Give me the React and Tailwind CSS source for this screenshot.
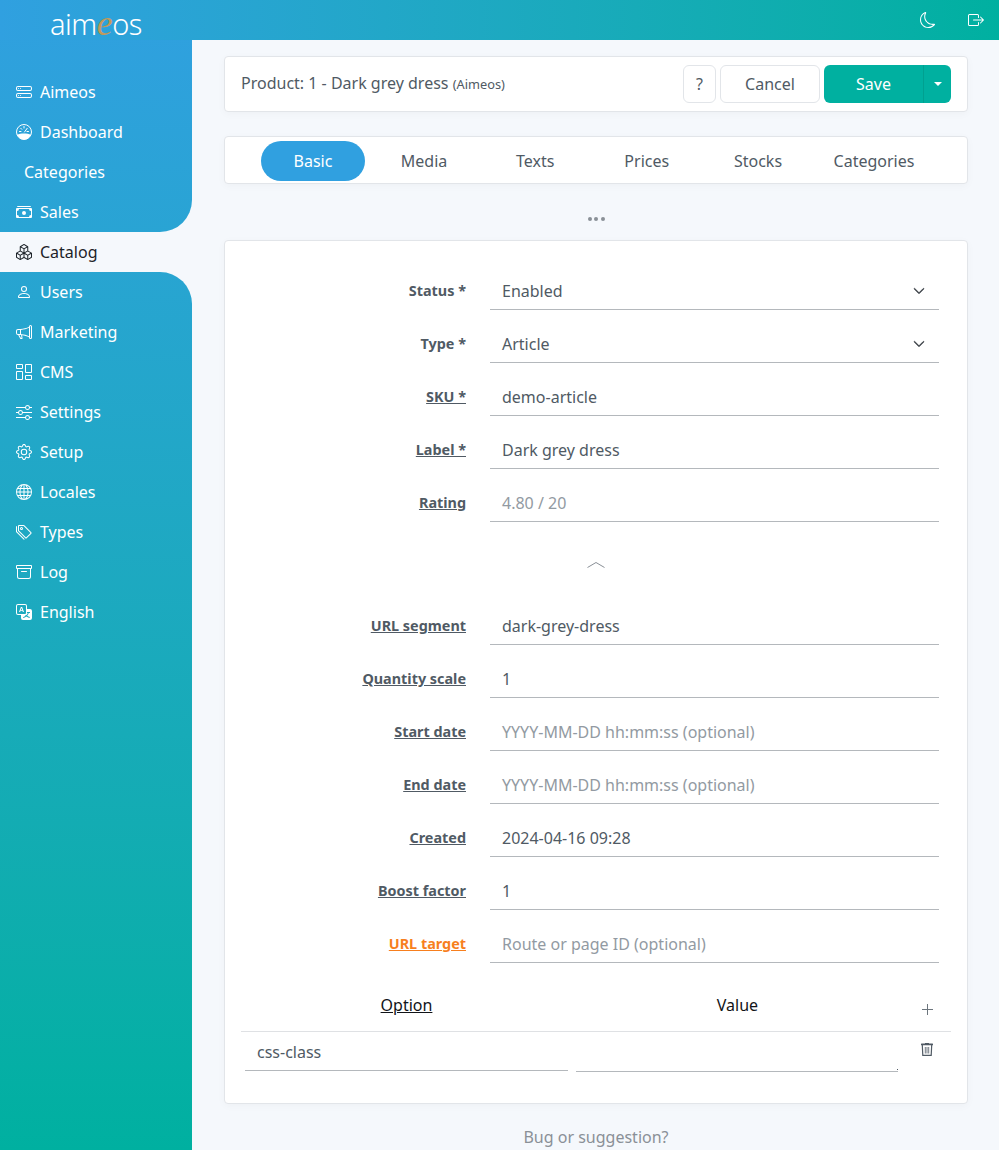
import React from "react";
import {
  BsArchive,
  BsBoxArrowRight,
  BsBoxes,
  BsCashStack,
  BsChevronDown,
  BsColumnsGap,
  BsGear,
  BsGlobe,
  BsHddStack,
  BsMegaphone,
  BsMoon,
  BsPerson,
  BsSliders,
  BsTags,
  BsTranslate,
} from "react-icons/bs";

const GaugeIcon = ({ className }) => (
  <svg className={className} viewBox="0 0 16 16" fill="none" stroke="currentColor">
    <circle cx="8" cy="8" r="7.5" />
    <path d="M1 10.5 C5 9 11 9 15 10.5 C14 13.5 11 15.5 8 15.5 C5 15.5 2 13.5 1 10.5Z" fill="currentColor" stroke="none" />
    <path d="M8 2.5 V4 M3.5 7.5 H5 M11 7.5 H12.5 M4.8 4.3 L5.8 5.3 M11.2 4.3 L8.5 8" strokeLinecap="round" />
  </svg>
);

const PlusIcon = ({ className }) => (
  <svg className={className} viewBox="0 0 11 11" fill="none" stroke="currentColor">
    <path d="M5.5 0 V11 M0 5.5 H11" />
  </svg>
);

const TrashIcon = ({ className }) => (
  <svg className={className} viewBox="0 0 12 14" fill="none" stroke="currentColor" strokeWidth="1.2">
    <path d="M4 1 H8 V2 H4Z" fill="currentColor" stroke="none" />
    <rect x="0" y="1.5" width="12" height="1.8" rx="0.5" fill="currentColor" stroke="none" />
    <path d="M1.3 3 L1.8 13.4 H10.2 L10.7 3" />
    <path d="M4.3 5 V11.5 M6 5 V11.5 M7.7 5 V11.5" strokeWidth="1" strokeOpacity="0.8" />
  </svg>
);

const topItems = [
  { label: "Aimeos", icon: BsHddStack },
  { label: "Dashboard", icon: GaugeIcon },
  { label: "Categories" },
  { label: "Sales", icon: BsCashStack },
];

const bottomItems = [
  { label: "Users", icon: BsPerson },
  { label: "Marketing", icon: BsMegaphone },
  { label: "CMS", icon: BsColumnsGap },
  { label: "Settings", icon: BsSliders },
  { label: "Setup", icon: BsGear },
  { label: "Locales", icon: BsGlobe },
  { label: "Types", icon: BsTags },
  { label: "Log", icon: BsArchive },
  { label: "English", icon: BsTranslate },
];

const tabs = [
  { label: "Basic", className: "w-[104px] bg-[#30a0e0] text-white rounded-[20px]" },
  { label: "Media", className: "w-[104px] ml-[7px]" },
  { label: "Texts", className: "w-[104.5px] ml-[7px]" },
  { label: "Prices", className: "w-[104.5px] ml-[7px]" },
  { label: "Stocks", className: "w-[104px] ml-[7px]" },
  { label: "Categories", className: "w-[114px] ml-[7px]" },
];

const basicFields = [
  { label: "Status *", value: "Enabled", select: true },
  { label: "Type *", value: "Article", select: true },
  { label: "SKU *", value: "demo-article", help: true },
  { label: "Label *", value: "Dark grey dress", help: true },
  { label: "Rating", value: "4.80 / 20", help: true, muted: true },
];

const moreFields = [
  { label: "URL segment", value: "dark-grey-dress", help: true },
  { label: "Quantity scale", value: "1", help: true },
  { label: "Start date", value: "YYYY-MM-DD hh:mm:ss (optional)", help: true, muted: true },
  { label: "End date", value: "YYYY-MM-DD hh:mm:ss (optional)", help: true, muted: true },
  { label: "Created", value: "2024-04-16 09:28", help: true },
  { label: "Boost factor", value: "1", help: true },
  { label: "URL target", value: "Route or page ID (optional)", help: true, muted: true, orange: true },
];

const NavItem = ({ item }) => {
  const Icon = item.icon;
  return (
    <div className="h-10 flex items-center pl-4 text-white text-base">
      {Icon ? (
        <>
          <Icon className="w-4 h-4 mr-2 shrink-0" />
          <span>{item.label}</span>
        </>
      ) : (
        <span className="pl-2">{item.label}</span>
      )}
    </div>
  );
};

const Field = ({ field }) => {
  let labelColor = "text-[#505a64]";
  if (field.orange) labelColor = "text-[#f77f1e]";
  return (
    <div className="h-[53px] flex">
      <div className="w-[225px] h-[38px] flex items-center justify-end">
        <span className={`text-[14.4px] font-bold ${labelColor} ${field.help ? "underline" : ""}`}>
          {field.label}
        </span>
      </div>
      <div className="w-[449px] ml-6 h-[38px] border-b border-[#b4b8bc] flex items-center justify-between pl-3 pr-[14px]">
        <span className={field.muted ? "text-[#929aa2]" : "text-[#505a64]"}>{field.value}</span>
        {field.select && <BsChevronDown className="w-3 h-3 text-[#343a40] stroke-1" />}
      </div>
    </div>
  );
};

export default function App() {
  return (
    <div className="w-[999px] h-[1150px] overflow-hidden bg-[#f5f8fc] font-['Noto_Sans',sans-serif] text-base text-[#505a64] flex flex-col">
      <header className="h-10 shrink-0 bg-gradient-to-r from-[#30a0e0] to-[#00b0a0] flex items-center justify-between">
        <div className="w-[192px] mt-[6px] flex justify-center items-baseline text-white text-[29px] font-light leading-[34px] tracking-[-0.5px]">
          aim<span className="text-[#c2995a] italic font-['Liberation_Serif',serif] text-[36px] leading-none">e</span>os
        </div>
        <div className="flex items-center pr-[15px]">
          <BsMoon className="w-4 h-4 text-white" />
          <BsBoxArrowRight className="w-4 h-4 text-white ml-[32px]" />
        </div>
      </header>

      <div className="flex-1 flex min-h-0">
        <aside className="w-[192px] shrink-0 flex flex-col">
          <nav className="h-[192px] pt-8 rounded-br-[32px] bg-fixed bg-gradient-to-b from-[#30a0e0] to-[#00b0a0]">
            {topItems.map((item) => (
              <NavItem key={item.label} item={item} />
            ))}
          </nav>
          <div className="h-10 flex items-center pl-4 text-[#1d2329]">
            <BsBoxes className="w-4 h-4 mr-2" />
            <span>Catalog</span>
          </div>
          <nav className="flex-1 rounded-tr-[32px] bg-fixed bg-gradient-to-b from-[#30a0e0] to-[#00b0a0]">
            {bottomItems.map((item) => (
              <NavItem key={item.label} item={item} />
            ))}
          </nav>
        </aside>

        <main className="w-[807px] pl-8 pr-[31px] pt-4">
          {/* Title bar */}
          <div className="h-14 bg-white border border-[#e2e5e9] rounded-[4px] shadow-[0_2px_8px_rgba(0,0,0,0.03)] flex items-center justify-between pl-4 pr-4">
            <div className="mb-[2px]">
              Product: 1 - Dark grey dress <span className="text-[12.8px]">(Aimeos)</span>
            </div>
            <div className="flex items-center">
              <button className="w-[33px] h-[38px] border border-[#e2e5e9] rounded-[6px]">?</button>
              <button className="w-[100px] h-[38px] ml-1 border border-[#e2e5e9] rounded-[6px]">Cancel</button>
              <div className="w-[127px] h-[38px] ml-1 flex bg-[#00b0a0] rounded-[6px] text-white">
                <button className="w-[100px] border-r border-[#00a090]">Save</button>
                <button className="flex-1 flex items-center justify-center">
                  <span className="border-x-[4px] border-x-transparent border-t-[4px] border-t-white" />
                </button>
              </div>
            </div>
          </div>

          {/* Tabs */}
          <div className="h-12 mt-6 pt-[2px] bg-white border border-[#e2e5e9] rounded-[4px] shadow-[0_2px_8px_rgba(0,0,0,0.03)] flex items-center pl-9">
            {tabs.map((tab) => (
              <div key={tab.label} className={`h-10 flex items-center justify-center ${tab.className}`}>
                {tab.label}
              </div>
            ))}
          </div>

          <div className="h-14 pt-[14px] flex items-center justify-center">
            <span className="flex gap-[2.5px]">
              <span className="w-1 h-1 rounded-full bg-[#8a9097]" />
              <span className="w-1 h-1 rounded-full bg-[#8a9097]" />
              <span className="w-1 h-1 rounded-full bg-[#8a9097]" />
            </span>
          </div>

          {/* Form card */}
          <div className="h-[864px] bg-white border border-[#e2e5e9] rounded-[4px] shadow-[0_2px_8px_rgba(0,0,0,0.03)] pt-[31px] px-4">
            {basicFields.map((field) => (
              <Field key={field.label} field={field} />
            ))}

            <div className="h-[70px] pb-[14px] flex items-center justify-center">
              <svg className="w-[18px] h-2 text-[#8a9097] ml-[-1px]" viewBox="0 0 18 8" fill="none" stroke="currentColor" strokeWidth="1">
                <path d="M0.5 6.5 L9 1.5 L17.5 6.5" />
              </svg>
            </div>

            {moreFields.map((field) => (
              <Field key={field.label} field={field} />
            ))}

            {/* Config table */}
            <div className="mt-[2px] h-[52px] flex items-end border-b border-[#dfe1e4] text-[#111418]">
              <div className="w-[331px] h-[46px] flex justify-center pt-2">
                <span className="underline">Option</span>
              </div>
              <div className="w-[331px] h-[46px] flex justify-center pt-2">Value</div>
              <div className="flex-1 h-[46px] flex justify-center pt-[19px]">
                <PlusIcon className="w-[11px] h-[11px] text-[#6c757d]" />
              </div>
            </div>
            <div className="flex pl-1 pt-[1px]">
              <div className="w-[323px] h-[38px] border-b border-[#b4b8bc] flex items-center pl-3">css-class</div>
              <div className="relative w-[322px] h-[39px] ml-2 border-b border-[#b4b8bc]">
                <span className="absolute right-0 bottom-[1px] w-[1px] h-[1px] bg-[#505a64]" />
              </div>
              <div className="flex-1 flex justify-center pt-[9px] pl-[4px]">
                <TrashIcon className="w-3 h-[14px] text-[#505a64]" />
              </div>
            </div>
          </div>

          <div className="h-[66px] flex items-center justify-center text-[#8a9097]">Bug or suggestion?</div>
        </main>
      </div>
    </div>
  );
}
